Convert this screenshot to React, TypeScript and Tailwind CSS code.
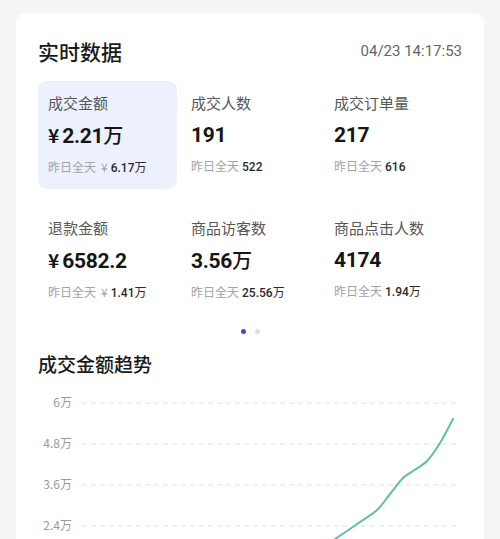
import React from "react";

type Stat = {
  label: string;
  value: string;
  yen?: boolean;
  unit?: string;
  subYen?: boolean;
  sub: string;
  subUnit?: string;
  active?: boolean;
};

const stats: Stat[] = [
  { label: "成交金额", yen: true, value: "2.21", unit: "万", subYen: true, sub: "6.17", subUnit: "万", active: true },
  { label: "成交人数", value: "191", sub: "522" },
  { label: "成交订单量", value: "217", sub: "616" },
  { label: "退款金额", yen: true, value: "6582.2", subYen: true, sub: "1.41", subUnit: "万" },
  { label: "商品访客数", value: "3.56", unit: "万", sub: "25.56", subUnit: "万" },
  { label: "商品点击人数", value: "4174", sub: "1.94", subUnit: "万" },
];

const CJK = "font-['Noto_Sans_CJK_SC','Noto_Sans',sans-serif]";
const NUM = "font-['Roboto','Noto_Sans_CJK_SC',sans-serif]";

function StatCell({ s }: { s: Stat }) {
  return (
    <div
      className={
        s.active
          ? "rounded-[9px] bg-[#edf1fd] pl-[10px] pt-[11px] pb-[12px]"
          : "rounded-[9px] pl-[10px] pt-[11px] pb-[12px]"
      }
    >
      <div className={`${CJK} text-[15px] leading-[22px] text-[#575757]`}>{s.label}</div>
      <div className={`${NUM} mt-[7px] flex items-baseline text-[21px] leading-[28px] font-bold text-[#161616]`}>
        {s.yen && <span className={`${CJK} mr-[3px] text-[19px]`}>¥</span>}
        <span className="tracking-[-0.3px]">{s.value}</span>
        {s.unit && <span className={`${CJK} text-[20px] font-medium`}>{s.unit}</span>}
      </div>
      <div className="mt-[8px] flex items-baseline text-[12px] leading-[18px]">
        <span className={`${CJK} text-[#a3a3a3]`}>昨日全天</span>
        {s.subYen && <span className={`${CJK} ml-[5px] text-[#a3a3a3]`}>¥</span>}
        <span className={`${NUM} ml-[3px] font-medium text-[#2a2a2a]`}>{s.sub}</span>
        {s.subUnit && <span className={`${CJK} text-[#2a2a2a]`}>{s.subUnit}</span>}
      </div>
    </div>
  );
}

function Chart() {
  const labels = [
    { t: "6万", y: 23 },
    { t: "4.8万", y: 64 },
    { t: "3.6万", y: 105 },
    { t: "2.4万", y: 146 },
  ];
  const pts: [number, number][] = [
    [270, 176],
    [284, 168],
    [297, 159],
    [309, 151],
    [322, 142],
    [339, 130],
    [352, 114],
    [365, 98],
    [375, 91],
    [389, 81],
    [402, 63],
    [415, 39],
  ];
  let d = `M ${pts[0][0]} ${pts[0][1]}`;
  for (let i = 1; i < pts.length; i++) {
    const p0 = pts[i - 2] || pts[i - 1];
    const p1 = pts[i - 1];
    const p2 = pts[i];
    const p3 = pts[i + 1] || p2;
    const c1x = p1[0] + (p2[0] - p0[0]) / 6;
    const c1y = p1[1] + (p2[1] - p0[1]) / 6;
    const c2x = p2[0] - (p3[0] - p1[0]) / 6;
    const c2y = p2[1] - (p3[1] - p1[1]) / 6;
    d += ` C ${c1x} ${c1y} ${c2x} ${c2y} ${p2[0]} ${p2[1]}`;
  }
  return (
    <svg width="424" height="200" viewBox="0 0 424 200" className="mt-[3px] block">
      {labels.map((l) => (
        <g key={l.t}>
          <text
            x="34"
            y={l.y + 4}
            textAnchor="end"
            fontSize="12"
            fill="#9a9a9a"
            className={CJK}
          >
            {l.t}
          </text>
          <line
            x1="44"
            x2="422"
            y1={l.y}
            y2={l.y}
            stroke="#e3e3e3"
            strokeWidth="1"
            strokeDasharray="5 4"
          />
        </g>
      ))}
      <path d={d} fill="none" stroke="#5fc19d" strokeWidth="2" strokeLinecap="round" />
    </svg>
  );
}

export default function App() {
  return (
    <div className={`${CJK} h-[539px] w-[500px] overflow-hidden bg-[#f4f5f7] px-4 pt-[13px]`}>
      <div className="rounded-[9px] bg-white px-[22px] pt-[26px] pb-6">
        <div className="flex items-center justify-between">
          <div className={`${CJK} text-[21px] leading-[24px] font-medium text-[#1a1a1a]`}>实时数据</div>
          <div className={`${NUM} text-[15px] leading-[24px] text-[#666666]`}>04/23 14:17:53</div>
        </div>
        <div className="mt-[18px] grid grid-cols-[139px_139px_139px] gap-x-[4px] gap-y-[17px]">
          {stats.map((s) => (
            <StatCell key={s.label} s={s} />
          ))}
        </div>
        <div className="mt-[15px] flex justify-center gap-[9px]">
          <div className="h-[5px] w-[5px] rounded-full bg-[#3d4fc4]" />
          <div className="h-[5px] w-[5px] rounded-full bg-[#dedede]" />
        </div>
        <div className={`${CJK} mt-[17px] text-[19px] leading-[26px] font-medium text-[#1a1a1a]`}>
          成交金额趋势
        </div>
        <Chart />
      </div>
    </div>
  );
}
